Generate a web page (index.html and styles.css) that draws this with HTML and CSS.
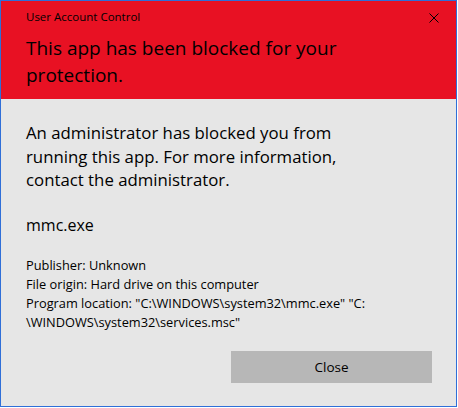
FILE: index.html
```html
<!DOCTYPE html>
<html>
<head>
<meta charset="utf-8">
<link rel="stylesheet" href="styles.css">
</head>
<body>
<div class="window">
  <div class="header">
    <div class="titlebar">
      <span class="title">User Account Control</span>
      <svg class="close-x" width="10" height="10" viewBox="0 0 10 10"><path d="M0.5 0.5 L9.5 9.5 M9.5 0.5 L0.5 9.5" stroke="#000" stroke-width="1" fill="none"/></svg>
    </div>
    <div class="headline">This app has been blocked for your protection.</div>
  </div>
  <div class="content">
    <p class="message">An administrator has blocked you from running this app. For more information, contact the administrator.</p>
    <p class="appname">mmc.exe</p>
    <div class="details">
      <div>Publisher: Unknown</div>
      <div>File origin: Hard drive on this computer</div>
      <div>Program location: "C:\WINDOWS\system32\mmc.exe" "C:<br>\WINDOWS\system32\services.msc"</div>
    </div>
    <div class="actions">
      <button class="btn">Close</button>
    </div>
  </div>
</div>
</body>
</html>
```
FILE: styles.css
```css
html, body {
  margin: 0;
  padding: 0;
  background: #ffffff;
}
body {
  font-family: "Open Sans", "Noto Sans", sans-serif;
  color: #000;
}
.window {
  width: 455px;
  height: 405px;
  border: 1px solid #2f6fd8;
  background: #e6e6e6;
  display: flex;
  flex-direction: column;
}
.header {
  background: #e81123;
  height: 98px;
  padding: 0 17px 0 25px;
  box-sizing: border-box;
}
.titlebar {
  display: flex;
  justify-content: space-between;
  align-items: flex-start;
  padding-top: 9px;
  height: 22px;
  box-sizing: border-box;
}
.title {
  font-size: 11.5px;
  line-height: 14px;
}
.close-x {
  margin-top: 3px;
}
.headline {
  font-size: 19px;
  line-height: 27px;
  width: 330px;
  margin-top: 12px;
}
.content {
  padding: 0 25px;
  flex: 1;
}
.message {
  font-size: 16.8px;
  line-height: 23.5px;
  margin: 22px 0 0 0;
  width: 345px;
}
.appname {
  font-size: 16px;
  line-height: 20px;
  margin: 23px 0 0 0;
}
.details {
  font-size: 12.8px;
  line-height: 19px;
  margin-top: 21px;
}
.actions {
  display: flex;
  justify-content: flex-end;
  margin-top: 19px;
}
.btn {
  width: 201px;
  height: 32px;
  background: #b7b7b7;
  border: none;
  font-family: inherit;
  font-size: 13.5px;
  color: #000;
  padding: 0;
  margin-right: -1px;
}
```
